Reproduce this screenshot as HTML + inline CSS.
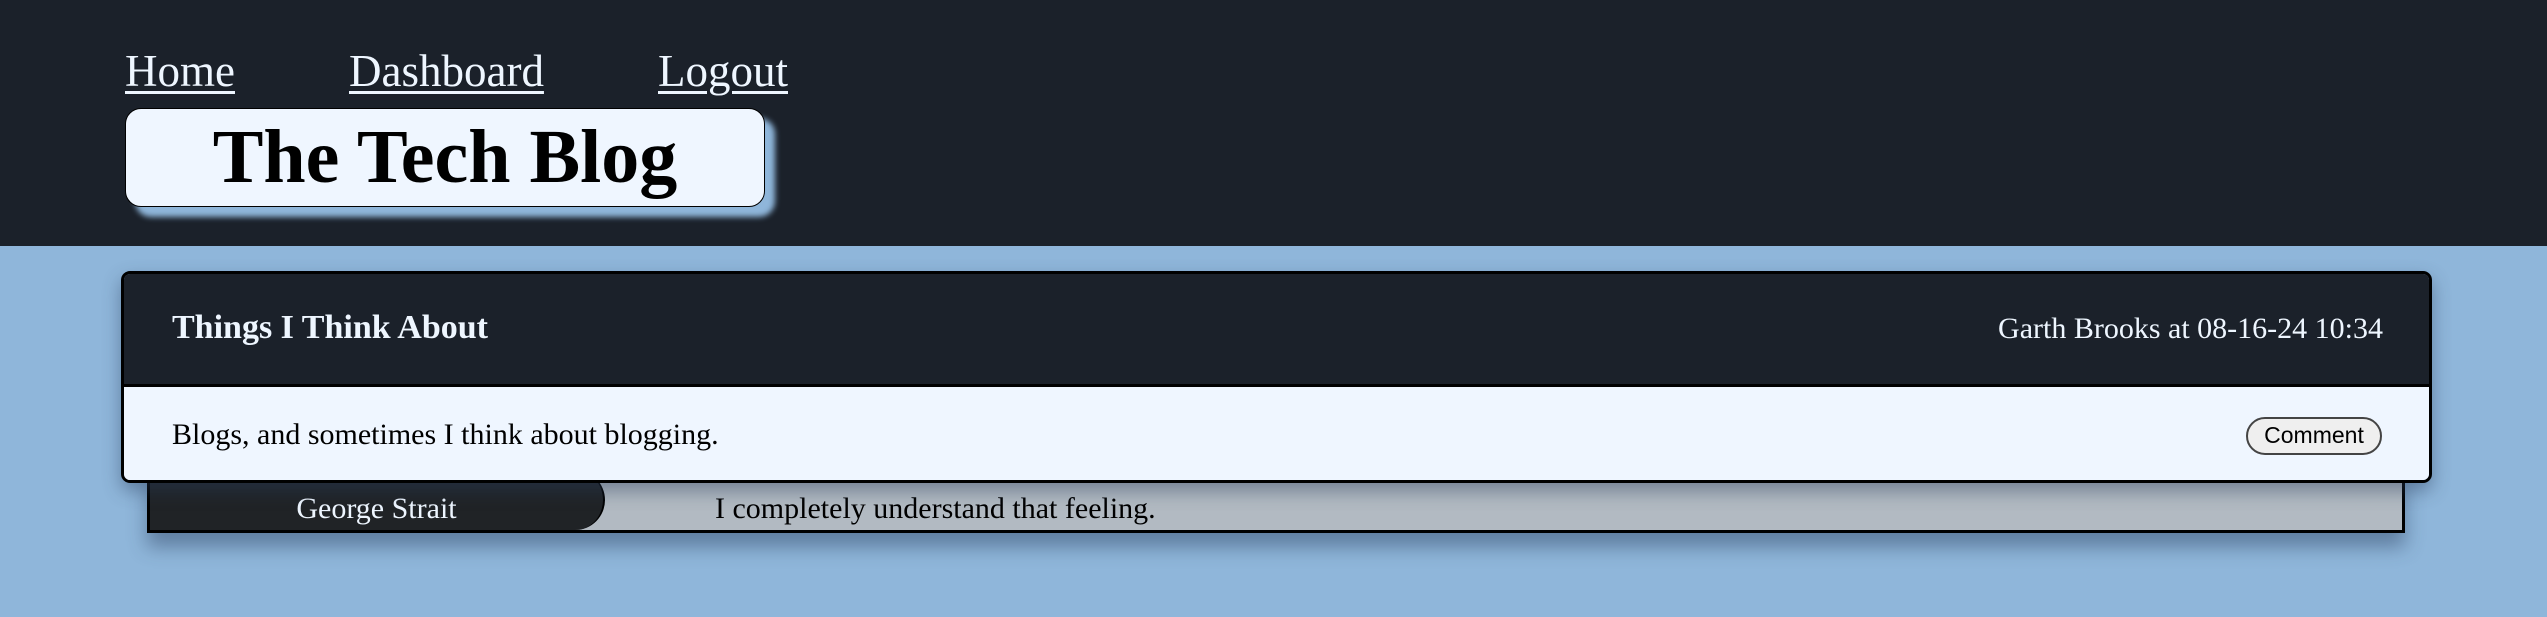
<!DOCTYPE html>
<html><head><meta charset="utf-8"><style>
*{margin:0;padding:0;box-sizing:border-box}
html,body{width:2547px;height:617px;overflow:hidden;background:#8fb6da;font-family:"Liberation Serif",serif}
.hdr{position:absolute;left:0;top:0;width:2547px;height:246px;background:#1b212a}
.nav a{position:absolute;top:41px;color:#eef6ff;font-size:45px;text-decoration:underline;text-decoration-thickness:3px;text-underline-offset:5px;line-height:60px}
.title{position:absolute;left:125px;top:108px;width:640px;height:99px;background:#eff6ff;border:1px solid #000;border-radius:16px;box-shadow:10px 10px 6px #8fb6da;text-align:center;font-weight:bold;font-size:76px;line-height:97px;color:#000}
.row{position:absolute;left:147px;top:470px;width:2258px;height:63px;background:#b2bac2;border:3px solid #000;border-top:none;box-shadow:0 14px 18px rgba(40,60,90,.45)}
.pill{position:absolute;left:0;top:0;width:455px;height:60px;background:#202326;border-right:2px solid #000;border-radius:0 30px 30px 0;color:#eef6ff;font-size:30px;text-align:center;line-height:78px}
.ctext{position:absolute;left:565px;top:14px;font-size:30px;line-height:50px;color:#000}
.card{position:absolute;left:121px;top:271px;width:2311px;height:212px;border:3px solid #000;border-radius:9px;overflow:hidden;box-shadow:0 8px 18px rgba(40,60,90,.45)}
.ch{height:113px;background:#1b212a;border-bottom:3px solid #000;position:relative}
.ch .t{position:absolute;left:48px;top:32px;color:#eef6ff;font-weight:bold;font-size:34px;line-height:44px}
.ch .m{position:absolute;right:46px;top:33px;color:#eef6ff;font-size:30px;line-height:44px}
.cb{height:93px;background:#eff6ff;position:relative}
.cb .t{position:absolute;left:48px;top:26px;font-size:30px;line-height:44px;color:#000}
.btn{position:absolute;left:2122px;top:30px;width:136px;height:38px;border:2px solid #444;border-radius:19px;background:#efefef;font-family:"Liberation Sans",sans-serif;font-size:23px;line-height:33px;text-align:center;color:#000}
</style></head><body>
<div class="hdr">
<div class="nav"><a style="left:125px">Home</a><a style="left:349px">Dashboard</a><a style="left:658px">Logout</a></div>
<div class="title">The Tech Blog</div>
</div>
<div class="row"><div class="pill">George Strait</div><div class="ctext">I completely understand that feeling.</div></div>
<div class="card">
<div class="ch"><div class="t">Things I Think About</div><div class="m">Garth Brooks at 08-16-24 10:34</div></div>
<div class="cb"><div class="t">Blogs, and sometimes I think about blogging.</div><div class="btn">Comment</div></div>
</div>
</body></html>
